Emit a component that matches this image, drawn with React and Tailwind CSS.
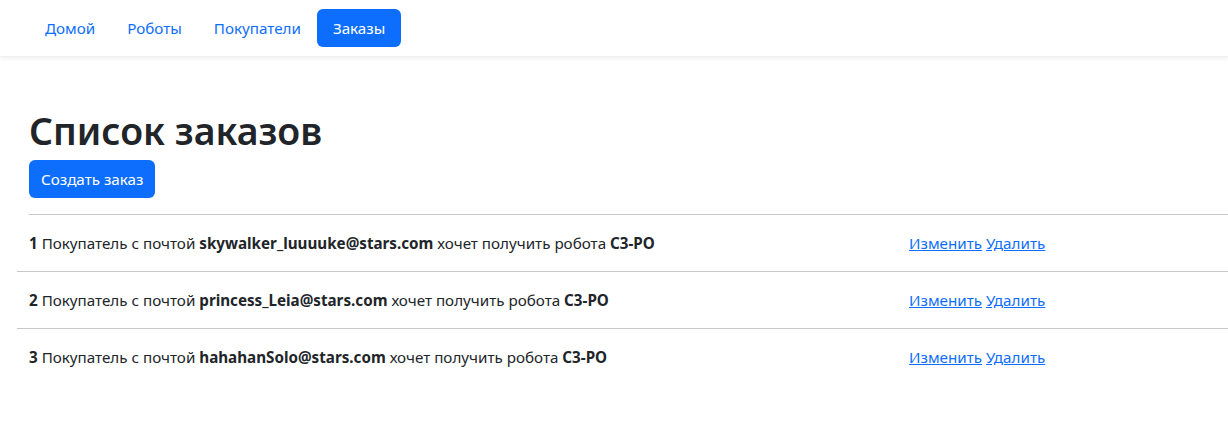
const NAV = ['Домой', 'Роботы', 'Покупатели', 'Заказы'];

const ORDERS = [
  { id: 1, email: 'skywalker_luuuuke@stars.com', robot: 'C3-PO' },
  { id: 2, email: 'princess_Leia@stars.com', robot: 'C3-PO' },
  { id: 3, email: 'hahahanSolo@stars.com', robot: 'C3-PO' },
];

export default function App() {
  return (
    <div className="min-h-[428px] bg-white text-[#212529] text-[15.2px] font-['Noto_Sans',sans-serif]">
      <nav className="h-[57px] flex items-center px-[29px] shadow-[0_2px_4px_rgba(0,0,0,0.06)] border-b border-[#f1f1f1]">
        <ul className="flex items-center">
          {NAV.map((item) => (
            <li key={item}>
              <a
                href="#"
                className={
                  item === 'Заказы'
                    ? 'block px-4 py-2 rounded-md bg-[#0d6efd] text-white'
                    : 'block px-4 py-2 text-[#0d6efd]'
                }
              >
                {item}
              </a>
            </li>
          ))}
        </ul>
      </nav>

      <main className="pt-[50px]">
        <div className="pl-[29px]">
          <h1 className="text-[37.5px] leading-[48px] font-semibold">Список заказов</h1>
          <button className="mt-[5px] h-[38px] px-3 rounded-md bg-[#0d6efd] text-white">
            Создать заказ
          </button>
        </div>

        <div className="mt-4 ml-[29px] border-t border-[#c8c8c8]" />
        <div className="ml-[17px]">
          {ORDERS.map((o, i) => (
            <div
              key={o.id}
              className={`flex items-center h-[57px] ${i < ORDERS.length - 1 ? 'border-b border-[#c8c8c8]' : ''}`}
            >
              <div className="w-[892px] pl-3">
                <b>{o.id}</b> Покупатель с почтой <b>{o.email}</b> хочет получить робота <b>{o.robot}</b>
              </div>
              <div className="flex gap-1">
                <a href="#" className="text-[#0d6efd] underline">Изменить</a>
                <a href="#" className="text-[#0d6efd] underline">Удалить</a>
              </div>
            </div>
          ))}
        </div>
      </main>
    </div>
  );
}
